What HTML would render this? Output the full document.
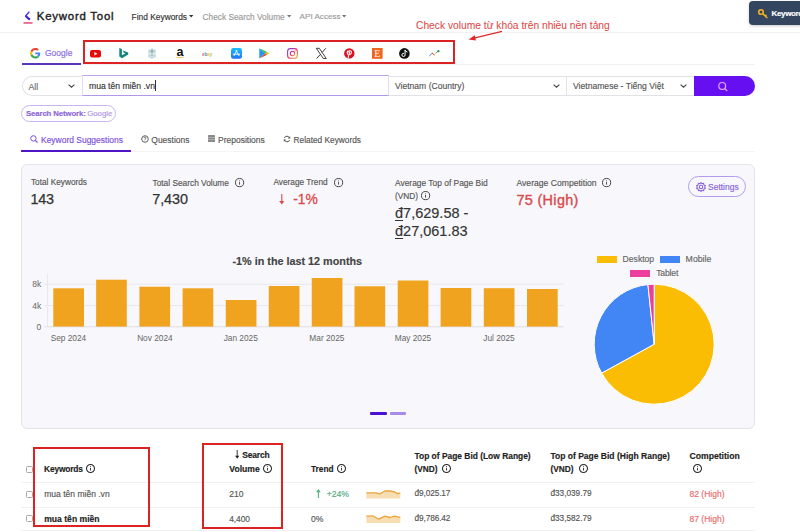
<!DOCTYPE html><html><head><meta charset="utf-8"><style>
*{margin:0;padding:0;box-sizing:border-box}
html,body{width:800px;height:532px;overflow:hidden;background:#fff;font-family:"Liberation Sans",sans-serif}
.t{position:absolute;white-space:nowrap;line-height:1;-webkit-text-stroke-width:0.15px}
.b{position:absolute}
svg{position:absolute;overflow:visible}
</style></head><body><div class="b" style="left:0px;top:32px;width:800px;height:1px;background:#f1f1f4"></div>
<svg style="left:23px;top:11px" width="10" height="13" viewBox="0 0 10 13"><path d="M6.4 0.6 L2.6 5 L6.8 8.6" fill="none" stroke="#4f22d8" stroke-width="1.3" stroke-linejoin="round"/><path d="M2.6 5 L6.8 8.6" stroke="#4f22d8" stroke-width="2.2"/><rect x="0.5" y="11.2" width="9" height="1.5" fill="#e04a7c"/></svg>
<div class="t" style="left:36.80px;top:11.35px;font-size:11.4px;color:#1e1e1e;letter-spacing:0.78px;-webkit-text-stroke:0.4px #1e1e1e;">Keyword Tool</div>
<div class="t" style="left:131.60px;top:13.19px;font-size:8.4px;color:#333;">Find Keywords</div>
<div class="t" style="left:202.60px;top:13.27px;font-size:8.3px;color:#9a9a9a;">Check Search Volume</div>
<div class="t" style="left:299.60px;top:13.44px;font-size:8.1px;color:#9a9a9a;">API Access</div>
<svg style="left:189.4px;top:15.3px" width="5" height="3" viewBox="0 0 5 3"><path d="M0 0 H4.4 L2.2 2.6Z" fill="#333"/></svg>
<svg style="left:286.90000000000003px;top:15.3px" width="5" height="3" viewBox="0 0 5 3"><path d="M0 0 H4.4 L2.2 2.6Z" fill="#777"/></svg>
<svg style="left:342.40000000000003px;top:15.3px" width="5" height="3" viewBox="0 0 5 3"><path d="M0 0 H4.4 L2.2 2.6Z" fill="#777"/></svg>
<div class="t" style="left:416.00px;top:20.62px;font-size:10.25px;color:#e04848;-webkit-text-stroke-width:0.05px;">Check volume từ khóa trên nhiều nền tảng</div>
<svg style="left:0;top:0" width="800" height="60"><path d="M502 31.4 L472 38.6" stroke="#e02a2a" stroke-width="1.3"/><path d="M468.5 39.6 L474.8 35.2 L475.9 40.6Z" fill="#e02a2a"/></svg>
<div class="b" style="left:749px;top:1.3px;width:60px;height:23.3px;background:#34465f;border-radius:4px;box-shadow:0 1px 3px rgba(0,0,0,.22)"></div>
<svg style="left:758px;top:9px" width="11" height="10" viewBox="0 0 11 10"><circle cx="3" cy="3" r="2.3" fill="none" stroke="#f2b01e" stroke-width="1.6"/><path d="M4.6 4.6 L9.4 9 M7.2 7 L8.4 5.9" stroke="#f2b01e" stroke-width="1.6"/></svg>
<div class="t" style="left:771.50px;top:10.03px;font-size:8.0px;color:#fff;font-weight:700;letter-spacing:-0.35px;">Keyword</div>
<div class="b" style="left:21px;top:64px;width:734px;height:1px;background:#f1f1f3"></div>
<svg style="left:30px;top:48px" width="10.5" height="10.5" viewBox="0 0 48 48"><path fill="#EA4335" d="M24 9.5c3.54 0 6.71 1.22 9.21 3.6l6.85-6.85C35.9 2.38 30.47 0 24 0 14.62 0 6.51 5.38 2.56 13.22l7.98 6.19C12.43 13.72 17.74 9.5 24 9.5z"/><path fill="#4285F4" d="M46.98 24.55c0-1.57-.15-3.09-.38-4.55H24v9.02h12.94c-.58 2.96-2.26 5.48-4.78 7.18l7.73 6c4.51-4.18 7.09-10.36 7.09-17.65z"/><path fill="#FBBC05" d="M10.53 28.59c-.48-1.45-.76-2.99-.76-4.59s.27-3.14.76-4.59l-7.98-6.19C.92 16.46 0 20.12 0 24c0 3.88.92 7.54 2.56 10.78l7.97-6.19z"/><path fill="#34A853" d="M24 48c6.48 0 11.93-2.13 15.89-5.81l-7.73-6c-2.15 1.45-4.92 2.3-8.16 2.3-6.26 0-11.57-4.22-13.47-9.91l-7.98 6.19C6.51 42.62 14.62 48 24 48z"/></svg>
<div class="t" style="left:45.00px;top:49.30px;font-size:8.5px;color:#8a6ae0;">Google</div>
<div class="b" style="left:21.6px;top:62.7px;width:59.5px;height:2.1px;background:#5b36b8"></div>
<div class="b" style="left:82.9px;top:40.2px;width:372.6px;height:23.5px;border:2px solid #dc2222"></div>
<svg style="left:90px;top:49.6px" width="11" height="7.6" viewBox="0 0 11 7.6"><rect x="0" y="0" width="11" height="7.6" rx="2" fill="#e60a0a"/><path d="M4.4 2.1 L7.4 3.8 L4.4 5.5Z" fill="#fff"/></svg>
<svg style="left:118.8px;top:48px" width="9.5" height="10.5" viewBox="0 0 9.5 10.5"><path d="M0.3 0 L2.9 0.9 V7.3 L6.4 5.3 L4.6 4.4 L3.8 2.6 L9.2 4.4 V6.6 L3 10.3 L0.3 8.5Z" fill="#13857f"/></svg>
<svg style="left:147px;top:48px" width="10" height="11" viewBox="0 0 10 11"><g fill="none" stroke="#b9d3d8" stroke-width="1.1"><path d="M2 1.2 V9.8 M8 1.2 V9.8"/><path d="M5 0.8 L2.3 3.2 L5 5.5 L7.7 3.2Z M5 5.5 L2.3 7.8 L5 10.2 L7.7 7.8Z"/></g><circle cx="5" cy="3.3" r="1.4" fill="#6f9aa3" opacity=".8"/><circle cx="5" cy="7.6" r="1.1" fill="#8fb2b9" opacity=".8"/></svg>
<svg style="left:175px;top:47px" width="10" height="11.5" viewBox="0 0 10 11.5"><text x="5" y="8.7" text-anchor="middle" font-family="Liberation Sans" font-weight="700" font-size="12.6" fill="#111">a</text><path d="M1.2 10.2 Q5 11.6 8.8 10" fill="none" stroke="#f5a623" stroke-width="0.9" opacity=".8"/></svg>
<svg style="left:202.3px;top:50.5px" width="12" height="6" viewBox="0 0 12 6"><text x="0" y="4.6" font-family="Liberation Sans" font-weight="700" font-size="4.8" letter-spacing="-0.3" opacity=".75"><tspan fill="#e53238">e</tspan><tspan fill="#0064d2">b</tspan><tspan fill="#f5af02">a</tspan><tspan fill="#86b817">y</tspan></text></svg>
<svg style="left:231px;top:48px" width="11" height="10.8" viewBox="0 0 11 10.8"><defs><linearGradient id="ap" x1="0" y1="0" x2="0" y2="1"><stop offset="0" stop-color="#18bffb"/><stop offset="1" stop-color="#2072f3"/></linearGradient></defs><rect x="0" y="0" width="11" height="10.8" rx="2.4" fill="url(#ap)"/><path d="M5.9 2.3 L3 7.7 M5.1 2.3 L8 7.7 M2.2 6.2 H8.8" stroke="#fff" stroke-width="0.9" stroke-linecap="round"/></svg>
<svg style="left:259px;top:48px" width="10.6" height="10.8" viewBox="0 0 10.6 10.8"><path d="M0.3 0.3 L6.2 5.4 L0.3 10.5Z" fill="#2196f3"/><path d="M0.3 0.3 L8.2 4.1 L6.2 5.4Z" fill="#2fbf5a"/><path d="M0.3 10.5 L6.2 5.4 L8.2 6.7Z" fill="#ea4335"/><path d="M6.2 5.4 L8.2 4.1 L10.4 5.4 L8.2 6.7Z" fill="#fbbc04"/></svg>
<svg style="left:287px;top:48px" width="11" height="10.8" viewBox="0 0 11 10.8"><defs><linearGradient id="ig" x1="0" y1="0" x2="1" y2="1"><stop offset="0" stop-color="#7b3fe4"/><stop offset=".5" stop-color="#e1306c"/><stop offset="1" stop-color="#fcaf45"/></linearGradient></defs><rect x="0.6" y="0.6" width="9.8" height="9.6" rx="2.8" fill="none" stroke="url(#ig)" stroke-width="1.1"/><circle cx="5.5" cy="5.4" r="2.2" fill="none" stroke="url(#ig)" stroke-width="1.1"/><circle cx="8.1" cy="2.8" r="0.55" fill="#c13584"/></svg>
<svg style="left:315.5px;top:48px" width="10.6" height="10.8" viewBox="0 0 10.6 10.8"><path d="M0.3 0.3 H3.3 L10.3 10.5 H7.3Z" fill="none" stroke="#222" stroke-width="0.85"/><path d="M9.8 0.3 L6.2 4.4 M4.3 6.5 L0.6 10.5" stroke="#222" stroke-width="0.9"/></svg>
<svg style="left:343.5px;top:48px" width="10.6" height="10.8" viewBox="0 0 10.6 10.8"><circle cx="5.3" cy="5.4" r="5.2" fill="#e0101f"/><path d="M4.6 3.8 Q5 2.6 6.2 2.8 Q7.8 3.1 7.3 5 Q6.8 6.6 5.3 6.2 M5.5 4.2 L4.2 9.6" fill="none" stroke="#fff" stroke-width="1.1" stroke-linecap="round"/><path d="M3.7 6.3 Q2.4 4.4 3.9 3" fill="none" stroke="#fff" stroke-width="1.1" stroke-linecap="round"/></svg>
<svg style="left:371.5px;top:48px" width="10.6" height="10.8" viewBox="0 0 10.6 10.8"><rect x="0" y="0" width="10.6" height="10.8" fill="#f1641e"/><text x="5.3" y="9" text-anchor="middle" font-family="Liberation Serif" font-size="10" fill="#fff">E</text></svg>
<svg style="left:399.3px;top:48px" width="10.8" height="10.8" viewBox="0 0 10.8 10.8"><circle cx="5.4" cy="5.4" r="5.3" fill="#111"/><path d="M6.1 2.3 V6.9 A1.6 1.6 0 1 1 4.5 5.3 M6.1 2.3 Q6.5 3.7 8 4" fill="none" stroke="#fff" stroke-width="1" stroke-linecap="round"/><path d="M5.6 2.2 V6.6" stroke="#25f4ee" stroke-width="0.4" opacity=".6"/></svg>
<svg style="left:428.5px;top:50px" width="11" height="6.5" viewBox="0 0 11 6.5"><path d="M0.5 5.8 L3.2 3.2" stroke="#6680d0" stroke-width="1" stroke-linecap="round"/><path d="M3.2 3.2 L5.1 4.9" stroke="#d9534f" stroke-width="1" stroke-linecap="round"/><path d="M5.1 4.9 L7.6 2.4" stroke="#f0c040" stroke-width="1" stroke-linecap="round"/><path d="M7.6 2.4 L9.2 1.2" stroke="#3aa35a" stroke-width="1" stroke-linecap="round"/><circle cx="9.5" cy="1.2" r="1.1" fill="#2f8f4a"/></svg>
<div class="b" style="left:21.6px;top:75.6px;width:61px;height:20px;border:1px solid #e2e2e6;border-right:none;border-radius:10px 0 0 10px;background:#fff"></div>
<div class="t" style="left:28.40px;top:82.55px;font-size:8.8px;color:#707070;">All</div>
<svg style="left:67.5px;top:83.5px" width="7" height="4" viewBox="0 0 7 4"><path d="M0.6 0.6 L3.5 3.2 L6.4 0.6" fill="none" stroke="#444" stroke-width="1.1"/></svg>
<div class="b" style="left:82px;top:75.3px;width:307px;height:20.4px;border:1px solid #b9a2ee;border-left-color:#e2dcf5;border-right-color:#e2dcf5;border-bottom-color:#b196ea;background:#fff"></div>
<div class="t" style="left:89.00px;top:82.22px;font-size:8.6px;color:#333;">mua tên miền .vn</div>
<div class="b" style="left:155.3px;top:80px;width:0.7px;height:11px;background:#333"></div>
<div class="b" style="left:388.6px;top:75.6px;width:306px;height:20px;border:1px solid #e2e2e6;border-left:none;background:#fff"></div>
<div class="t" style="left:395.00px;top:81.75px;font-size:8.57px;color:#555;">Vietnam (Country)</div>
<svg style="left:553px;top:83.5px" width="7" height="4" viewBox="0 0 7 4"><path d="M0.6 0.6 L3.5 3.2 L6.4 0.6" fill="none" stroke="#444" stroke-width="1.1"/></svg>
<div class="b" style="left:566.2px;top:75.6px;width:1px;height:20px;background:#e2e2e6"></div>
<div class="t" style="left:573.00px;top:81.72px;font-size:8.6px;color:#555;">Vietnamese - Tiếng Việt</div>
<svg style="left:679.5px;top:83.5px" width="7" height="4" viewBox="0 0 7 4"><path d="M0.6 0.6 L3.5 3.2 L6.4 0.6" fill="none" stroke="#444" stroke-width="1.1"/></svg>
<div class="b" style="left:694.4px;top:75.6px;width:61px;height:20px;background:#6610f2;border-radius:0 10px 10px 0"></div>
<svg style="left:717px;top:81px" width="12" height="12" viewBox="0 0 12 12"><circle cx="5.2" cy="4.9" r="3.4" fill="none" stroke="#e5a8ff" stroke-width="1.2"/><path d="M7.6 7.4 L10.2 10" stroke="#e5a8ff" stroke-width="1.3"/></svg>
<div class="b" style="left:21px;top:105px;width:94.6px;height:16.6px;border:1px solid #c9b5f2;border-radius:9px;background:#fff"></div>
<div class="t" style="left:26.00px;top:110.44px;font-size:7.75px;color:#8b66d6;font-weight:700;letter-spacing:-0.1px;">Search Network:</div>
<div class="t" style="left:87.20px;top:110.40px;font-size:7.8px;color:#ad95e6;">Google</div>
<div class="b" style="left:21px;top:151px;width:734px;height:1px;background:#f4f4f6"></div>
<svg style="left:30px;top:134.5px" width="8" height="8" viewBox="0 0 8 8"><circle cx="3.4" cy="3.4" r="2.7" fill="none" stroke="#7c4ddb" stroke-width="1"/><path d="M5.3 5.3 L7.5 7.5" stroke="#7c4ddb" stroke-width="1.1"/></svg>
<div class="t" style="left:41.00px;top:135.82px;font-size:8.48px;color:#7c4ddb;">Keyword Suggestions</div>
<div class="b" style="left:21.3px;top:149.5px;width:109.7px;height:2.1px;background:#4e14c8"></div>
<svg style="left:140.5px;top:134.5px" width="8" height="8" viewBox="0 0 8 8"><circle cx="4" cy="4" r="3.3" fill="none" stroke="#555" stroke-width="0.9"/><path d="M2.9 3.1 Q3 2 4 2 Q5.1 2 5.1 3 Q5.1 3.7 4 4.1 V4.8" fill="none" stroke="#555" stroke-width="0.8"/><circle cx="4" cy="5.9" r="0.45" fill="#555"/></svg>
<div class="t" style="left:151.30px;top:135.82px;font-size:8.48px;color:#555;">Questions</div>
<svg style="left:208px;top:135px" width="7" height="7" viewBox="0 0 7 7"><rect x="0" y="0" width="7" height="7" fill="#8a8a8a" rx="0.5"/><rect x="0" y="2" width="7" height="0.6" fill="#c8c8c8"/><rect x="0" y="4.4" width="7" height="0.6" fill="#c8c8c8"/></svg>
<div class="t" style="left:218.00px;top:135.80px;font-size:8.5px;color:#555;">Prepositions</div>
<svg style="left:282.5px;top:134.5px" width="8" height="8" viewBox="0 0 8 8"><path d="M6.6 3.2 A2.8 2.8 0 0 0 1.3 3" fill="none" stroke="#555" stroke-width="1"/><path d="M1.4 4.8 A2.8 2.8 0 0 0 6.7 5" fill="none" stroke="#555" stroke-width="1"/><path d="M7.2 1.2 V3.6 H4.9Z M0.8 6.8 V4.4 H3.1Z" fill="#555"/></svg>
<div class="t" style="left:293.60px;top:135.97px;font-size:8.31px;color:#555;">Related Keywords</div>
<div class="b" style="left:21.4px;top:164.2px;width:733.8px;height:265px;background:#f8f8fc;border:1px solid #e4e4ea;border-radius:6px"></div>
<div class="t" style="left:31.00px;top:179.11px;font-size:8.26px;color:#555;">Total Keywords</div>
<div class="t" style="left:30.50px;top:191.91px;font-size:14.4px;color:#333;letter-spacing:-0.3px;-webkit-text-stroke:0.25px #333;">143</div>
<div class="t" style="left:152.50px;top:179.04px;font-size:8.34px;color:#555;">Total Search Volume</div>
<svg style="left:234.6px;top:178px" width="9.2" height="9.2" viewBox="0 0 9.2 9.2"><circle cx="4.6" cy="4.6" r="4.1" fill="none" stroke="#444" stroke-width="1"/><rect x="4.1499999999999995" y="3.8999999999999995" width="0.9" height="2.8" fill="#444"/><circle cx="4.6" cy="2.6999999999999997" r="0.5" fill="#444"/></svg>
<div class="t" style="left:152.30px;top:191.91px;font-size:14.4px;color:#333;letter-spacing:-0.1px;-webkit-text-stroke:0.25px #333;">7,430</div>
<div class="t" style="left:273.50px;top:179.10px;font-size:8.27px;color:#555;">Average Trend</div>
<svg style="left:333.6px;top:178px" width="9.2" height="9.2" viewBox="0 0 9.2 9.2"><circle cx="4.6" cy="4.6" r="4.1" fill="none" stroke="#444" stroke-width="1"/><rect x="4.1499999999999995" y="3.8999999999999995" width="0.9" height="2.8" fill="#444"/><circle cx="4.6" cy="2.6999999999999997" r="0.5" fill="#444"/></svg>
<svg style="left:278.8px;top:194.4px" width="5.6" height="10.6" viewBox="0 0 5.6 10.6"><path d="M2.8 0 V8" stroke="#d9484a" stroke-width="1.1"/><path d="M0.2 7 L2.8 10.5 L5.4 7Z" fill="#d9484a"/></svg>
<div class="t" style="left:293.20px;top:192.92px;font-size:13.8px;color:#d9484a;-webkit-text-stroke:0.3px #d9484a;">-1%</div>
<div class="t" style="left:395.00px;top:178.98px;font-size:8.41px;color:#555;">Average Top of Page Bid</div>
<div class="t" style="left:395.00px;top:191.97px;font-size:8.3px;color:#555;">(VND)</div>
<svg style="left:420.6px;top:190.8px" width="9.2" height="9.2" viewBox="0 0 9.2 9.2"><circle cx="4.6" cy="4.6" r="4.1" fill="none" stroke="#444" stroke-width="1"/><rect x="4.1499999999999995" y="3.8999999999999995" width="0.9" height="2.8" fill="#444"/><circle cx="4.6" cy="2.6999999999999997" r="0.5" fill="#444"/></svg>
<div class="t" style="left:395.00px;top:206.33px;font-size:14.5px;color:#333;"><u style='text-decoration-thickness:1px;text-underline-offset:1.5px'>đ</u>7,629.58 -</div>
<div class="t" style="left:395.00px;top:223.83px;font-size:14.5px;color:#333;"><u style='text-decoration-thickness:1px;text-underline-offset:1.5px'>đ</u>27,061.83</div>
<div class="t" style="left:516.50px;top:178.81px;font-size:8.61px;color:#555;">Average Competition</div>
<svg style="left:602.4px;top:178.2px" width="9.2" height="9.2" viewBox="0 0 9.2 9.2"><circle cx="4.6" cy="4.6" r="4.1" fill="none" stroke="#444" stroke-width="1"/><rect x="4.1499999999999995" y="3.8999999999999995" width="0.9" height="2.8" fill="#444"/><circle cx="4.6" cy="2.6999999999999997" r="0.5" fill="#444"/></svg>
<div class="t" style="left:516.40px;top:192.81px;font-size:14.4px;color:#d9484a;letter-spacing:0.35px;-webkit-text-stroke:0.35px #d9484a;">75 (High)</div>
<div class="b" style="left:688px;top:175.6px;width:57.6px;height:21.9px;border:1px solid #b39bee;border-radius:11px"></div>
<svg style="left:695.5px;top:181.8px" width="10" height="10" viewBox="0 0 10 10"><path d="M5 0.6 L6 1.7 L7.6 1.3 L7.9 2.9 L9.4 3.6 L8.7 5 L9.4 6.4 L7.9 7.1 L7.6 8.7 L6 8.3 L5 9.4 L4 8.3 L2.4 8.7 L2.1 7.1 L0.6 6.4 L1.3 5 L0.6 3.6 L2.1 2.9 L2.4 1.3 L4 1.7Z" fill="none" stroke="#8763da" stroke-width="1.1" stroke-linejoin="round"/><circle cx="5" cy="5" r="1.7" fill="none" stroke="#8763da" stroke-width="1.1"/></svg>
<div class="t" style="left:708.00px;top:182.60px;font-size:8.5px;color:#8763da;">Settings</div>
<div class="t" style="left:232.50px;top:255.86px;font-size:10.8px;color:#444;font-weight:700;">-1% in the last 12 months</div>
<svg style="left:0;top:0" width="800" height="532">
<g stroke="#e6e6ec" stroke-width="1">
<path d="M44.3 284.2 H563.5"/>
<path d="M44.3 305.6 H563.5"/>
<path d="M44.3 326.8 H563.5" stroke="#dcdce4"/>
<path d="M47.6 274 V327.3" stroke="#e6e6ec"/>
</g>
<rect x="53.3" y="288.3" width="30.7" height="38.30" fill="#f0a31f"/>
<rect x="96.1" y="279.7" width="30.7" height="46.90" fill="#f0a31f"/>
<rect x="139.4" y="286.7" width="30.7" height="39.90" fill="#f0a31f"/>
<rect x="182.6" y="288.3" width="30.7" height="38.30" fill="#f0a31f"/>
<rect x="225.75" y="300" width="30.7" height="26.60" fill="#f0a31f"/>
<rect x="268.75" y="286" width="30.7" height="40.60" fill="#f0a31f"/>
<rect x="311.75" y="278" width="30.7" height="48.60" fill="#f0a31f"/>
<rect x="354.5" y="286.25" width="30.7" height="40.35" fill="#f0a31f"/>
<rect x="397.7" y="280.5" width="30.7" height="46.10" fill="#f0a31f"/>
<rect x="440.6" y="288" width="30.7" height="38.60" fill="#f0a31f"/>
<rect x="483.8" y="288.2" width="30.7" height="38.40" fill="#f0a31f"/>
<rect x="527" y="289" width="30.7" height="37.60" fill="#f0a31f"/>
<g font-family="Liberation Sans" font-size="8.5" fill="#666" text-anchor="end">
<text x="41.2" y="287.1">8k</text><text x="41.2" y="308.6">4k</text><text x="41.2" y="329.8">0</text>
</g><g font-family="Liberation Sans" font-size="8.3" fill="#666" text-anchor="middle">
<text x="68.4" y="341.2">Sep 2024</text>
<text x="154.9" y="341.2">Nov 2024</text>
<text x="240.75" y="341.2">Jan 2025</text>
<text x="326.9" y="341.2">Mar 2025</text>
<text x="413" y="341.2">May 2025</text>
<text x="499" y="341.2">Jul 2025</text>
</g></svg>
<div class="b" style="left:597px;top:256.4px;width:20px;height:7px;background:#fbbc04"></div>
<div class="t" style="left:622.60px;top:255.02px;font-size:8.6px;color:#666;">Desktop</div>
<div class="b" style="left:660px;top:256.4px;width:20px;height:7px;background:#4285f4"></div>
<div class="t" style="left:685.60px;top:254.89px;font-size:8.75px;color:#666;">Mobile</div>
<div class="b" style="left:630.4px;top:270.4px;width:20px;height:7px;background:#ec3e9c"></div>
<div class="t" style="left:656.20px;top:269.12px;font-size:8.6px;color:#666;letter-spacing:-0.15px;">Tablet</div>
<svg style="left:0;top:0" width="800" height="532">
<path d="M654.2 344.2 L654.20 284.20 A60 60 0 1 1 601.62 373.11Z" fill="#fbbc04" stroke="#fff" stroke-width="1"/>
<path d="M654.2 344.2 L601.62 373.11 A60 60 0 0 1 647.93 284.53Z" fill="#4285f4" stroke="#fff" stroke-width="1"/>
<path d="M654.2 344.2 L647.93 284.53 A60 60 0 0 1 654.20 284.20Z" fill="#ec3e9c" stroke="#fff" stroke-width="1"/>
</svg>
<div class="b" style="left:370.3px;top:412.3px;width:16.6px;height:3px;background:#4b10d4;border-radius:1px"></div>
<div class="b" style="left:390px;top:412.3px;width:16px;height:3px;background:#a68be8;border-radius:1px"></div>
<div class="b" style="left:21px;top:482px;width:734px;height:1px;background:#f1f1f3"></div>
<div class="b" style="left:21px;top:507px;width:734px;height:1px;background:#f1f1f3"></div>
<div class="b" style="left:21px;top:530px;width:734px;height:1px;background:#f1f1f3"></div>
<div class="b" style="left:26px;top:466.2px;width:7px;height:7px;border:1px solid #a8a8a8;border-radius:1.5px;background:#fff"></div>
<div class="b" style="left:26px;top:490.8px;width:7px;height:7px;border:1px solid #a8a8a8;border-radius:1.5px;background:#fff"></div>
<div class="b" style="left:26px;top:515.3px;width:7px;height:7px;border:1px solid #a8a8a8;border-radius:1.5px;background:#fff"></div>
<div class="t" style="left:44.10px;top:464.89px;font-size:8.4px;color:#222;font-weight:700;letter-spacing:-0.17px;">Keywords</div>
<svg style="left:85.9px;top:464.2px" width="9" height="9" viewBox="0 0 9 9"><circle cx="4.5" cy="4.5" r="4.0" fill="none" stroke="#2a2a2a" stroke-width="1.05"/><rect x="4.05" y="3.9" width="0.9" height="2.6" fill="#2a2a2a"/><circle cx="4.5" cy="2.6" r="0.5" fill="#2a2a2a"/></svg>
<svg style="left:234.7px;top:450.3px" width="4.4" height="8.8" viewBox="0 0 4.4 8.8"><path d="M2.2 0 V6.5" stroke="#222" stroke-width="0.9"/><path d="M0.1 5.8 L2.2 8.7 L4.3 5.8Z" fill="#222"/></svg>
<div class="t" style="left:242.30px;top:450.80px;font-size:8.5px;color:#222;font-weight:700;letter-spacing:-0.2px;">Search</div>
<div class="t" style="left:229.30px;top:464.72px;font-size:8.6px;color:#222;font-weight:700;">Volume</div>
<svg style="left:263.3px;top:464.3px" width="9" height="9" viewBox="0 0 9 9"><circle cx="4.5" cy="4.5" r="4.0" fill="none" stroke="#2a2a2a" stroke-width="1.05"/><rect x="4.05" y="3.9" width="0.9" height="2.6" fill="#2a2a2a"/><circle cx="4.5" cy="2.6" r="0.5" fill="#2a2a2a"/></svg>
<div class="t" style="left:311.00px;top:464.97px;font-size:8.3px;color:#222;font-weight:700;">Trend</div>
<svg style="left:337px;top:464.3px" width="9" height="9" viewBox="0 0 9 9"><circle cx="4.5" cy="4.5" r="4.0" fill="none" stroke="#2a2a2a" stroke-width="1.05"/><rect x="4.05" y="3.9" width="0.9" height="2.6" fill="#2a2a2a"/><circle cx="4.5" cy="2.6" r="0.5" fill="#2a2a2a"/></svg>
<div class="t" style="left:414.50px;top:452.07px;font-size:8.42px;color:#222;font-weight:700;">Top of Page Bid (Low Range)</div>
<div class="t" style="left:414.50px;top:464.97px;font-size:8.3px;color:#222;font-weight:700;">(VND)</div>
<svg style="left:442.2px;top:464.2px" width="9" height="9" viewBox="0 0 9 9"><circle cx="4.5" cy="4.5" r="4.0" fill="none" stroke="#2a2a2a" stroke-width="1.05"/><rect x="4.05" y="3.9" width="0.9" height="2.6" fill="#2a2a2a"/><circle cx="4.5" cy="2.6" r="0.5" fill="#2a2a2a"/></svg>
<div class="t" style="left:550.40px;top:451.99px;font-size:8.52px;color:#222;font-weight:700;">Top of Page Bid (High Range)</div>
<div class="t" style="left:550.40px;top:464.97px;font-size:8.3px;color:#222;font-weight:700;">(VND)</div>
<svg style="left:578.6px;top:464.2px" width="9" height="9" viewBox="0 0 9 9"><circle cx="4.5" cy="4.5" r="4.0" fill="none" stroke="#2a2a2a" stroke-width="1.05"/><rect x="4.05" y="3.9" width="0.9" height="2.6" fill="#2a2a2a"/><circle cx="4.5" cy="2.6" r="0.5" fill="#2a2a2a"/></svg>
<div class="t" style="left:689.50px;top:451.89px;font-size:8.64px;color:#222;font-weight:700;">Competition</div>
<svg style="left:693px;top:464.3px" width="9" height="9" viewBox="0 0 9 9"><circle cx="4.5" cy="4.5" r="4.0" fill="none" stroke="#2a2a2a" stroke-width="1.05"/><rect x="4.05" y="3.9" width="0.9" height="2.6" fill="#2a2a2a"/><circle cx="4.5" cy="2.6" r="0.5" fill="#2a2a2a"/></svg>
<div class="t" style="left:44.20px;top:489.77px;font-size:8.54px;color:#555;">mua tên miền .vn</div>
<div class="t" style="left:229.30px;top:489.75px;font-size:8.57px;color:#555;">210</div>
<svg style="left:315.6px;top:489px" width="4.8" height="9" viewBox="0 0 4.8 9"><path d="M2.4 2.5 V9" stroke="#55b083" stroke-width="1.1"/><path d="M0.1 3.2 L2.4 0 L4.7 3.2Z" fill="#55b083"/></svg>
<div class="t" style="left:326.70px;top:489.69px;font-size:8.63px;color:#4fab7e;">+24%</div>
<div class="t" style="left:414.50px;top:490.02px;font-size:8.25px;color:#555;letter-spacing:-0.1px;">đ9,025.17</div>
<div class="t" style="left:550.40px;top:490.02px;font-size:8.24px;color:#555;">đ33,039.79</div>
<div class="t" style="left:689.50px;top:489.78px;font-size:8.53px;color:#e86a6a;">82 (High)</div>
<div class="t" style="left:44.20px;top:514.51px;font-size:8.61px;color:#222;font-weight:700;">mua tên miền</div>
<div class="t" style="left:229.30px;top:515.19px;font-size:8.4px;color:#555;letter-spacing:-0.1px;">4,400</div>
<div class="t" style="left:311.00px;top:514.92px;font-size:8.6px;color:#555;">0%</div>
<div class="t" style="left:414.50px;top:515.22px;font-size:8.25px;color:#555;letter-spacing:-0.1px;">đ9,786.42</div>
<div class="t" style="left:550.40px;top:515.22px;font-size:8.24px;color:#555;">đ33,582.79</div>
<div class="t" style="left:689.50px;top:514.98px;font-size:8.53px;color:#e86a6a;">87 (High)</div>
<svg style="left:0;top:0" width="800" height="532"><path d="M366.4 492.8 L376.1 492.8 L379.6 494 L384.8 491 L390 491 L394.3 491.9 L397.8 493.6 L400.3 492.8 L400.3 498.5 L366.4 498.5Z" fill="#f6ddb2"/><path d="M366.4 492.8 L376.1 492.8 L379.6 494 L384.8 491 L390 491 L394.3 491.9 L397.8 493.6 L400.3 492.8" fill="none" stroke="#eaa43c" stroke-width="1.3" stroke-linejoin="round"/></svg>
<svg style="left:0;top:0" width="800" height="532"><path d="M366.4 516.1 L372.7 515.8 L378.7 519.2 L384.8 516.1 L390 517.5 L394.3 516.1 L400.3 517.3 L400.3 523 L366.4 523Z" fill="#f6ddb2"/><path d="M366.4 516.1 L372.7 515.8 L378.7 519.2 L384.8 516.1 L390 517.5 L394.3 516.1 L400.3 517.3" fill="none" stroke="#eaa43c" stroke-width="1.3" stroke-linejoin="round"/></svg>
<div class="b" style="left:32.7px;top:447.3px;width:117.8px;height:80px;border:2px solid #dc2222"></div>
<div class="b" style="left:202.2px;top:442.9px;width:81.2px;height:86.2px;border:2px solid #dc2222"></div></body></html>
